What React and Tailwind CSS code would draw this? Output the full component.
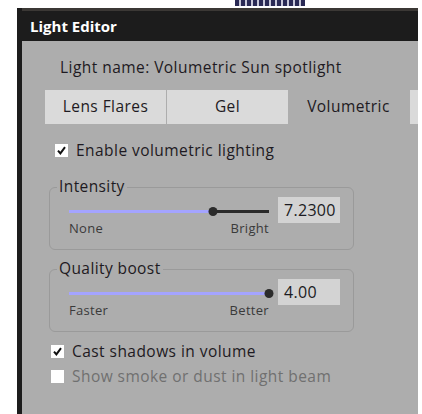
import React from 'react';

const font = { fontFamily: '"Open Sans", "Noto Sans", sans-serif' };

function Check({ checked, x, label, muted, mt }) {
  return (
    <div className={`flex h-[13px] items-center ${x} ${mt}`}>
      <span className="flex h-[13px] w-[13px] shrink-0 items-center justify-center bg-white">
        {checked && (
          <svg width="11" height="11" viewBox="0 0 11 11">
            <path d="M2 5.6 L4.4 8.4 L9 2.2" fill="none" stroke="#111" strokeWidth="2" />
          </svg>
        )}
      </span>
      <span
        className={`ml-[8px] whitespace-nowrap text-[15.5px] leading-none tracking-[0.45px] ${
          muted ? 'text-[#707070]' : 'text-[#1e1a22]'
        }`}
      >
        {label}
      </span>
    </div>
  );
}

function SliderGroup({ title, value, pct, low, high, mt }) {
  return (
    <div className={`relative ${mt} ml-[27px] h-[63px] w-[305px] rounded-[6px] border border-[#9a9a9a] pl-[19px] pt-[9px]`}>
      <span className="absolute -top-[9px] left-[7px] bg-[#adadad] px-[2px] text-[15.5px] leading-none tracking-[0.4px] text-[#1e1a22]">
        {title}
      </span>
      <div className="flex items-start">
        <div className="w-[200px]">
          <div className="relative mt-[13px] h-[3px] w-[200px] bg-[#2a2a2a]">
            <div className="h-[3px] bg-[#a4a4ff]" style={{ width: `${pct}%` }} />
            <div
              className="absolute top-[-3px] h-[9px] w-[9px] -translate-x-1/2 rounded-full bg-[#2b2b2b]"
              style={{ left: `${pct}%` }}
            />
          </div>
          <div className="mt-[9px] flex justify-between text-[13px] leading-none tracking-[0.3px] text-[#3a3a3a]">
            <span>{low}</span>
            <span>{high}</span>
          </div>
        </div>
        <div className="ml-[9px] flex h-[26px] w-[62px] items-center bg-[#d3d3d3] pl-[6px] text-[16px] tracking-[0.3px] text-[#1b1b22]">
          {value}
        </div>
      </div>
    </div>
  );
}

export default function App() {
  return (
    <div className="h-[414px] w-[422px] overflow-hidden bg-white" style={font}>
      <div className="flex h-[8px] items-start">
        <div className="ml-[235px] h-[6px] w-[70px] bg-[repeating-linear-gradient(90deg,#2a2a55_0_4px,#c8c8d8_4px_6px)]" />
      </div>
      <div className="ml-[17px] mr-[4px] flex h-[406px] flex-col bg-[#1c1c1c] pl-[5px]">
        <div className="flex h-[33px] items-center border-t-[3px] border-[#3b3835] pl-[8px] text-[15px] font-bold text-white">
          Light Editor
        </div>
        <div className="flex-1 bg-[#adadad]">
          <div className="ml-[38px] mt-[19px] flex h-[16px] items-center text-[15.5px] leading-none tracking-[0.45px] text-[#1e1a22]">
            Light name: Volumetric Sun spotlight
          </div>
          <div className="ml-[23px] mt-[14px] flex h-[34px] text-[15.5px] tracking-[0.45px] text-[#1e1a22]">
            <div className="flex w-[121px] items-center justify-center bg-[#dadada]">Lens Flares</div>
            <div className="ml-[1px] flex w-[121px] items-center justify-center bg-[#dadada]">Gel</div>
            <div className="flex w-[121px] items-center justify-center">Volumetric</div>
            <div className="ml-[1px] flex-1 bg-[#dadada]" />
          </div>
          <Check checked mt="mt-[20px]" x="ml-[33px]" label="Enable volumetric lighting" />
          <SliderGroup mt="mt-[30px]" title="Intensity" value="7.2300" pct={72} low="None" high="Bright" />
          <SliderGroup mt="mt-[19px]" title="Quality boost" value="4.00" pct={100} low="Faster" high="Better" />
          <Check checked mt="mt-[13px]" x="ml-[29px]" label="Cast shadows in volume" />
          <Check mt="mt-[12px]" x="ml-[29px]" label="Show smoke or dust in light beam" muted />
        </div>
      </div>
    </div>
  );
}
